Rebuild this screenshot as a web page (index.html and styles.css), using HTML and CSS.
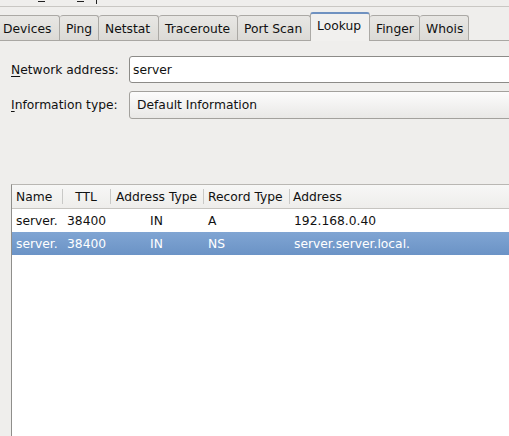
FILE: index.html
```html
<!DOCTYPE html>
<html>
<head>
<meta charset="utf-8">
<link rel="stylesheet" href="styles.css">
</head>
<body>
<div class="menubar">
  <span class="mk mk1"></span>
  <span class="mk mk2"></span>
  <span class="mk mk3"></span>
</div>
<div class="tabs">
  <div class="tab first t-devices">Devices</div>
  <div class="tab t-ping">Ping</div>
  <div class="tab t-netstat">Netstat</div>
  <div class="tab t-trace">Traceroute</div>
  <div class="tab t-port">Port Scan</div>
  <div class="tab active t-lookup">Lookup</div>
  <div class="tab t-finger">Finger</div>
  <div class="tab t-whois">Whois</div>
</div>
<div class="page">
  <div class="form">
    <label class="lbl"><u>N</u>etwork address:</label>
    <div class="entry">server</div>
    <label class="lbl"><u>I</u>nformation type:</label>
    <div class="combo">Default Information</div>
  </div>
  <div class="tree">
    <div class="row head">
      <div class="c c-name">Name</div>
      <div class="c c-ttl">TTL</div>
      <div class="c c-at">Address Type</div>
      <div class="c c-rt">Record Type</div>
      <div class="c c-addr">Address</div>
    </div>
    <div class="row">
      <div class="c c-name">server.</div>
      <div class="c c-ttl">38400</div>
      <div class="c c-at">IN</div>
      <div class="c c-rt">A</div>
      <div class="c c-addr">192.168.0.40</div>
    </div>
    <div class="row sel">
      <div class="c c-name">server.</div>
      <div class="c c-ttl">38400</div>
      <div class="c c-at">IN</div>
      <div class="c c-rt">NS</div>
      <div class="c c-addr">server.server.local.</div>
    </div>
  </div>
</div>
</body>
</html>
```
FILE: styles.css
```css
html, body {
  margin: 0;
  padding: 0;
}
body {
  background: #efeeec;
  font-family: "DejaVu Sans", sans-serif;
  font-size: 12.3px;
  color: #111;
  overflow: hidden;
  width: 509px;
  height: 436px;
}
.menubar {
  height: 6px;
  border-bottom: 1px solid #c9c7c3;
  display: flex;
  align-items: flex-start;
}
.mk {
  display: block;
  background: #222;
}
.mk1 { width: 7px; height: 1px; margin-left: 38px; margin-top: 1px; }
.mk2 { width: 7px; height: 1px; margin-left: 32px; margin-top: 1px; }
.mk3 { width: 1px; height: 4px; margin-left: 12px; }

.tabs {
  display: flex;
  align-items: flex-end;
  margin-top: 4px;
  height: 29px;
  border-bottom: 1px solid #a9a7a3;
}
.tab {
  box-sizing: border-box;
  height: 25px;
  line-height: 26px;
  padding: 0 0 0 6px;
  border-top: 1px solid #aba9a5;
  border-right: 1px solid #aba9a5;
  border-radius: 3px 3px 0 0;
  background: linear-gradient(#e8e7e4, #dcdad6);
  white-space: nowrap;
  flex: none;
}
.tab.first {
  padding-left: 3px;
  border-radius: 0 3px 0 0;
}
.t-devices { width: 60px; }
.t-ping { width: 39px; }
.t-netstat { width: 60px; }
.t-trace { width: 79px; }
.t-port { width: 73px; }
.t-lookup { width: 60px; }
.t-finger { width: 50px; }
.t-whois { width: 49px; }
.tab.active {
  height: 29px;
  line-height: 25px;
  margin-bottom: -1px;
  margin-left: -1px;
  border-left: 1px solid #aba9a5;
  border-top: 2px solid #6f91c0;
  background: #f1f0ee;
  padding-left: 6px;
}

.page {
  padding: 15px 0 0 11px;
}
.form {
  display: grid;
  grid-template-columns: 118px 1fr;
  row-gap: 8px;
  align-items: center;
  margin-right: -20px;
}
.lbl {
  color: #111;
}
.lbl u {
  text-decoration-thickness: 1px;
  text-underline-offset: 2px;
}
.entry {
  height: 25px;
  line-height: 26px;
  border: 1px solid #8c8b88;
  border-radius: 3px 0 0 3px;
  background: #fff;
  padding-left: 3px;
}
.combo {
  height: 26px;
  line-height: 27px;
  border: 1px solid #a3a19d;
  border-radius: 3px 0 0 3px;
  background: linear-gradient(#fcfcfc, #e9e8e6);
  padding-left: 7px;
}

.tree {
  margin-top: 65px;
  margin-right: -20px;
  height: 300px;
  background: #fff;
  border-top: 1px solid #b9b7b3;
  border-left: 1px solid #8f8e8b;
}
.row {
  display: grid;
  grid-template-columns: 50px 48px 93px 86px 1fr;
  height: 23px;
  line-height: 24px;
}
.row.head {
  background: linear-gradient(#f7f7f6, #eeedeb);
  border-bottom: 1px solid #c6c4c0;
}
.c {
  padding-left: 4px;
  white-space: nowrap;
  overflow: hidden;
}
.head .c {
  position: relative;
}
.head .c + .c::before {
  content: "";
  position: absolute;
  left: 0;
  top: 4px;
  bottom: 4px;
  border-left: 1px solid #c9c9c7;
}
.c-ttl, .c-at { padding-left: 0; text-align: center; }
.row:not(.head) .c-ttl { text-align: left; padding-left: 5px; }
.c-rt { padding-left: 5px; }
.c-addr { padding-left: 5px; }
.head .c-at { text-align: left; padding-left: 6px; }
.head .c-addr { padding-left: 4px; }
.row.sel {
  background: linear-gradient(#80a5d3, #6b93c6);
  color: #fff;
}
```
